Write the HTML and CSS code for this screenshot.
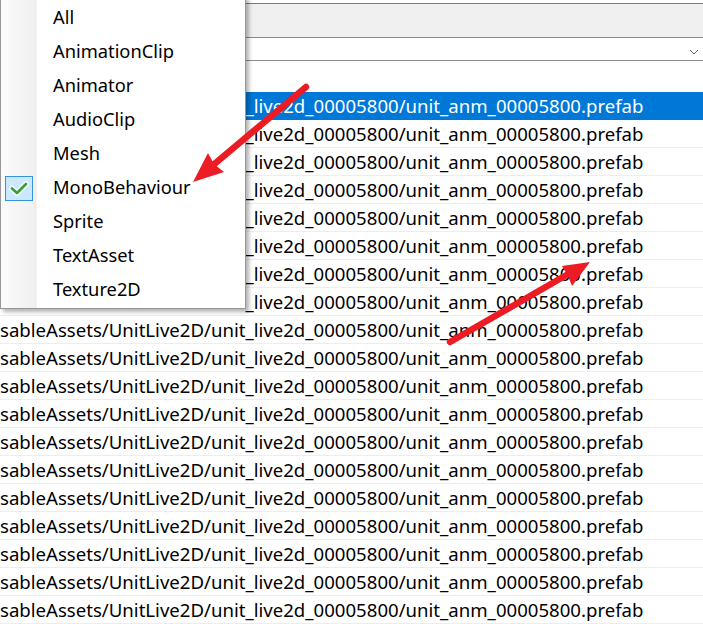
FILE: index.html
```html
<!DOCTYPE html>
<html>
<head>
<meta charset="utf-8">
<link rel="stylesheet" href="styles.css">
</head>
<body>
<div class="window">
  <div class="topgap"></div>
  <div class="toolbar"></div>
  <div class="combo">
    <svg class="chev" width="10" height="6" viewBox="0 0 10 6"><polyline points="1,1 5,5 9,1" fill="none" stroke="#606060" stroke-width="1"/></svg>
  </div>
  <div class="spacer"></div>
  <div class="list">
    <div class="row sel">sableAssets/UnitLive2D/unit_live2d_00005800/unit_anm_00005800.prefab</div>
    <div class="row">sableAssets/UnitLive2D/unit_live2d_00005800/unit_anm_00005800.prefab</div>
    <div class="row">sableAssets/UnitLive2D/unit_live2d_00005800/unit_anm_00005800.prefab</div>
    <div class="row">sableAssets/UnitLive2D/unit_live2d_00005800/unit_anm_00005800.prefab</div>
    <div class="row">sableAssets/UnitLive2D/unit_live2d_00005800/unit_anm_00005800.prefab</div>
    <div class="row">sableAssets/UnitLive2D/unit_live2d_00005800/unit_anm_00005800.prefab</div>
    <div class="row">sableAssets/UnitLive2D/unit_live2d_00005800/unit_anm_00005800.prefab</div>
    <div class="row">sableAssets/UnitLive2D/unit_live2d_00005800/unit_anm_00005800.prefab</div>
    <div class="row">sableAssets/UnitLive2D/unit_live2d_00005800/unit_anm_00005800.prefab</div>
    <div class="row">sableAssets/UnitLive2D/unit_live2d_00005800/unit_anm_00005800.prefab</div>
    <div class="row">sableAssets/UnitLive2D/unit_live2d_00005800/unit_anm_00005800.prefab</div>
    <div class="row">sableAssets/UnitLive2D/unit_live2d_00005800/unit_anm_00005800.prefab</div>
    <div class="row">sableAssets/UnitLive2D/unit_live2d_00005800/unit_anm_00005800.prefab</div>
    <div class="row">sableAssets/UnitLive2D/unit_live2d_00005800/unit_anm_00005800.prefab</div>
    <div class="row">sableAssets/UnitLive2D/unit_live2d_00005800/unit_anm_00005800.prefab</div>
    <div class="row">sableAssets/UnitLive2D/unit_live2d_00005800/unit_anm_00005800.prefab</div>
    <div class="row">sableAssets/UnitLive2D/unit_live2d_00005800/unit_anm_00005800.prefab</div>
    <div class="row">sableAssets/UnitLive2D/unit_live2d_00005800/unit_anm_00005800.prefab</div>
    <div class="row">sableAssets/UnitLive2D/unit_live2d_00005800/unit_anm_00005800.prefab</div>
  </div>
</div>

<div class="menu">
  <div class="item"><span class="chk"></span><span class="label">All</span></div>
  <div class="item"><span class="chk"></span><span class="label">AnimationClip</span></div>
  <div class="item"><span class="chk"></span><span class="label">Animator</span></div>
  <div class="item"><span class="chk"></span><span class="label">AudioClip</span></div>
  <div class="item"><span class="chk"></span><span class="label">Mesh</span></div>
  <div class="item"><span class="chk on"><svg width="26" height="23" viewBox="0 0 26 23"><polyline points="6,11.5 11,16 20,7" fill="none" stroke="#ffffff" stroke-opacity="0.85" stroke-width="5.5" stroke-linecap="round" stroke-linejoin="round"/><polyline points="6,11.5 11,16 20,7" fill="none" stroke="#3c9e3c" stroke-width="2.8" stroke-linecap="round" stroke-linejoin="round"/></svg></span><span class="label">MonoBehaviour</span></div>
  <div class="item"><span class="chk"></span><span class="label">Sprite</span></div>
  <div class="item"><span class="chk"></span><span class="label">TextAsset</span></div>
  <div class="item"><span class="chk"></span><span class="label">Texture2D</span></div>
</div>

<svg class="arrows" width="703" height="626" viewBox="0 0 703 626">
  <line x1="306" y1="87" x2="212" y2="166" stroke="#ed1c24" stroke-width="6.5" stroke-linecap="round"/>
  <polygon points="193,182 208,153 214,164 224,172" fill="#ed1c24"/>
  <line x1="450" y1="342" x2="570" y2="273" stroke="#ed1c24" stroke-width="6.5" stroke-linecap="round"/>
  <polygon points="590,262 562,266 568,276 572,286" fill="#ed1c24"/>
</svg>
</body>
</html>
```
FILE: styles.css
```css
html, body {
  margin: 0;
  padding: 0;
  width: 703px;
  height: 626px;
  overflow: hidden;
  background: #ffffff;
  font-family: "Noto Sans", "Segoe UI", sans-serif;
  color: #000000;
}

.window {
  display: flex;
  flex-direction: column;
  width: 703px;
  height: 626px;
  overflow: hidden;
}

.topgap {
  height: 3px;
  flex: none;
}

.toolbar {
  flex: none;
  height: 33px;
  background: #f0f0f0;
  border-top: 1px solid #7c7c7c;
  border-bottom: 1px solid #8c8c8c;
}

.combo {
  flex: none;
  height: 22px;
  border-bottom: 1px solid #8c8c8c;
  display: flex;
  justify-content: flex-end;
  align-items: center;
  padding-right: 4px;
}

.chev {
  margin-top: 6px;
}

.spacer {
  flex: none;
  height: 31px;
}

.list {
  flex: none;
  display: flex;
  flex-direction: column;
}

.row {
  flex: none;
  height: 27px;
  line-height: 27px;
  border-bottom: 1px solid #ededed;
  font-size: 18.6px;
  white-space: nowrap;
  overflow: hidden;
  padding-left: 0;
}

.row.sel {
  background: #0078d7;
  color: #ffffff;
  border-bottom-color: #0078d7;
}

.menu {
  position: absolute;
  left: 0;
  top: -4px;
  width: 244px;
  padding: 2px 0 3px 0;
  border: 1px solid #979797;
  background: linear-gradient(to right, #fbfbfb 0px, #f0f0f0 34px, #e8e8e8 35px, #ffffff 36px, #ffffff 100%);
  box-shadow: 3px 3px 4px rgba(0, 0, 0, 0.3);
}

.item {
  display: flex;
  align-items: center;
  height: 34px;
  font-size: 18.3px;
}

.chk {
  flex: none;
  width: 28px;
  height: 25px;
  margin-left: 4px;
  margin-right: 20px;
  box-sizing: border-box;
  display: flex;
  align-items: center;
  justify-content: center;
}

.chk.on {
  background: #cce8ff;
  border: 1px solid #3393df;
  margin-top: 4px;
}

.label {
  white-space: nowrap;
}

.arrows {
  position: absolute;
  left: 0;
  top: 0;
  pointer-events: none;
}
```
